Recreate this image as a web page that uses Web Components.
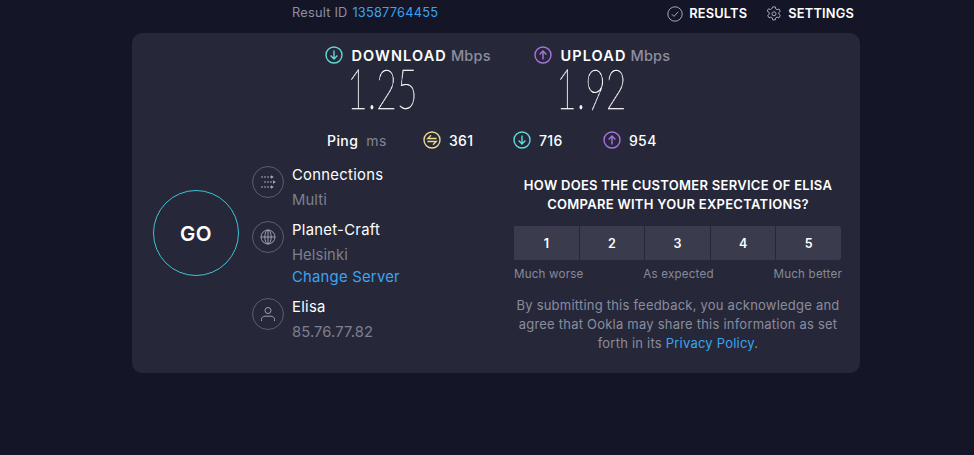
<!DOCTYPE html>
<html><head><meta charset="utf-8"><title>Speedtest result</title>
<style>
html,body{margin:0;height:100%;background:#141526;}
body{font-family:Inter,"Noto Sans",sans-serif;color:#fff;overflow:hidden;}
</style></head>
<body>
<st-app></st-app>
<script>
const ICONS={
 down:c=>`<svg width="18" height="18" viewBox="0 0 18 18" fill="none" stroke="${c}"><circle cx="9" cy="9" r="8" stroke-width="1.4"/><path d="M9 4.6v8.4M5.6 9.6 9 13l3.4-3.4" stroke-width="1.4"/></svg>`,
 up:c=>`<svg width="18" height="18" viewBox="0 0 18 18" fill="none" stroke="${c}"><circle cx="9" cy="9" r="8" stroke-width="1.4"/><path d="M9 13.4V5M5.6 8.4 9 5l3.4 3.4" stroke-width="1.4"/></svg>`,
 ping:c=>`<svg width="18" height="18" viewBox="0 0 18 18" fill="none" stroke="${c}"><circle cx="9" cy="9" r="8" stroke-width="1.4"/><path d="M13.600 7.500H4.700L8 4.200M4.400 10.500h8.900L10 13.800" stroke-width="1.300"/></svg>`,
 check:`<svg width="16" height="16" viewBox="0 0 16 16" fill="none" stroke="#a6a8b6"><circle cx="8" cy="8" r="7.200" stroke-width="1"/><path d="M4.800 8.200 7 10.400l4.200-4.600" stroke-width="1"/></svg>`,
 gear:`<svg width="16" height="16" viewBox="0 0 16 16" fill="none" stroke="#a6a8b6" stroke-width="1"><path d="M6.700.900h2.600l.400 2 1.400.800 1.900-.700 1.300 2.300-1.500 1.300v1.600l1.500 1.300-1.300 2.300-1.900-.700-1.400.800-.400 2H6.700l-.4-2-1.400-.8-1.900.7-1.300-2.300 1.500-1.300V6.400L1.200 5.100 2.500 2.800l1.900.7 1.400-.8z"/><circle cx="8" cy="7.800" r="2"/></svg>`,
 conn:`<svg width="15" height="14" viewBox="0 0 15 14" fill="none" stroke="#a6a8b8" stroke-width="1"><path d="M0 2h10M3 7h9M0 12h10" stroke-dasharray="2 1"/><path d="M10 .2 12.800 2 10 3.800zM12 5.200 14.800 7 12 8.800zM10 10.200 12.800 12 10 13.800z" fill="#a6a8b8" stroke="none"/></svg>`,
 globe:`<svg width="16" height="16" viewBox="0 0 16 16" fill="none" stroke="#9d9fae" stroke-width="1"><circle cx="8" cy="8" r="7"/><ellipse cx="8" cy="8" rx="3.200" ry="7"/><path d="M1 8h14M8 1v14"/></svg>`,
 user:`<svg width="16" height="16" viewBox="0 0 16 16" fill="none" stroke="#9d9fae" stroke-width="1"><circle cx="8" cy="4.500" r="3"/><path d="M1.500 15v-1.500c0-2 1.800-3.300 3.600-3.300h5.800c1.800 0 3.600 1.300 3.600 3.300V15"/></svg>`
};
function el(name,style,html){
 customElements.define(name,class extends HTMLElement{
  constructor(){super();const s=this.attachShadow({mode:"open"});
   s.innerHTML=`<style>${style}</style>`+(typeof html==="function"?html(this):html);}
 });
}
el("st-topbar",`:host{display:flex;height:33px;box-sizing:border-box;padding:0 120px 8px 292px;align-items:center;font-size:12.800px}
 .id{color:#8d8fa1;letter-spacing:.22px}a{color:#3aa4f0;text-decoration:none;margin-left:1px}
 nav{margin-left:auto;display:flex;gap:19px;font-weight:600;font-size:12.800px;position:relative;top:1px;letter-spacing:.2px}
 nav span{display:flex;align-items:center;gap:6px}svg{display:block}`,
 `<div class="id">Result ID <a>13587764455</a></div><nav><span>${ICONS.check}RESULTS</span><span>${ICONS.gear}SETTINGS</span></nav>`);
el("st-speed",`:host{display:block;width:175px}
 .h{display:flex;align-items:center;gap:8.500px;font-size:14.500px;font-weight:600;white-space:nowrap;letter-spacing:1.1px}
 .h i{font-style:normal;color:#8d8fa1;font-weight:500;margin-left:-4.500px;letter-spacing:.2px}
 svg{display:block}
 .v{font-family:Lato,sans-serif;font-weight:200;-webkit-text-stroke:.45px #fff;font-size:55px;line-height:46px;margin:1px 0 0 22px;transform:scaleX(.65);transform-origin:0 50%;height:46px;white-space:nowrap;color:#fff;will-change:transform}`,
 t=>`<div class="h">${t.getAttribute("kind")==="up"?ICONS.up("#a872e0"):ICONS.down("#5fd9d4")}<span>${t.getAttribute("label")}</span> <i>Mbps</i></div><div class="v">${t.getAttribute("value")}</div>`);
el("st-lat",`:host{display:flex;align-items:center;gap:8px;font-size:14px;font-weight:500;letter-spacing:.4px;width:90px}svg{display:block}`,
 t=>{const k=t.getAttribute("kind");const i=k==="up"?ICONS.up("#a872e0"):k==="down"?ICONS.down("#5fd9d4"):ICONS.ping("#e8d98c");return `${i}<span><slot></slot></span>`});
el("st-info",`:host{display:grid;grid-template-columns:32px auto;column-gap:8px;font-size:14.800px;line-height:25px;letter-spacing:.1px}
 .c{width:30px;height:30px;border:1px solid #5c5e70;border-radius:50%;display:flex;align-items:center;justify-content:center;margin-top:3px}
 svg{display:block}
 .n{color:#fff;letter-spacing:.3px}.s{color:#7d7f8e;white-space:nowrap}
 ::slotted(a){color:#3aa4f0;display:block;line-height:19px;margin-bottom:3px;letter-spacing:.25px}`,
 t=>`<div class="c">${ICONS[t.getAttribute("icon")]}</div><div><div class="n">${t.getAttribute("name")}</div><div class="s">${t.getAttribute("sub")}</div><slot></slot></div>`);
el("st-rating",`:host{display:flex;height:34px;gap:1px;background:#262839}
 div{flex:1;display:flex;align-items:center;justify-content:center;font-size:12.500px;font-weight:600;background:#3a3c4e}
 div:first-child{border-radius:3px 0 0 3px}div:last-child{border-radius:0 3px 3px 0}`,`<div>1</div><div>2</div><div>3</div><div>4</div><div>5</div>`);
el("st-survey",`:host{display:block;width:328px;text-align:center}
 h3{margin:0;font-size:13px;font-weight:600;line-height:19px;letter-spacing:.28px;white-space:nowrap}
 st-rating{margin:12px 1px 0 0}
 .l{display:flex;justify-content:space-between;color:#868899;font-size:11.600px;margin-top:7px;line-height:14px;letter-spacing:.2px}
 p{margin:15px 0 0;color:#8a8c9e;font-size:13px;line-height:19px;letter-spacing:.22px;white-space:nowrap}
 a{color:#3aa4f0}`,
 `<h3>HOW DOES THE CUSTOMER SERVICE OF ELISA<br>COMPARE WITH YOUR EXPECTATIONS?</h3><st-rating></st-rating>
 <div class="l"><span>Much worse</span><span>As expected</span><span>Much better</span></div>
 <p>By submitting this feedback, you acknowledge and<br>agree that Ookla may share this information as set<br>forth in its <a>Privacy Policy</a>.</p>`);
el("st-go",`:host{display:flex;flex:none;width:84px;height:84px;border:1px solid #3fc3d6;border-radius:50%;align-items:center;justify-content:center;font-size:20.500px;font-weight:600;letter-spacing:.4px}`,`GO`);
el("st-card",`:host{display:block;width:728px;height:340px;box-sizing:border-box;margin-left:132px;background:#262839;border-radius:10px;padding-top:13px}
 .speeds{display:flex;padding-left:193px;gap:34px}
 .ping{display:flex;align-items:center;height:20px;margin-top:19px;padding-left:195px;font-size:14px;font-weight:500}
 .ping>span:first-child{letter-spacing:.4px}
 .ping .m{color:#83858f;margin-left:8px;margin-right:36px;font-weight:400;letter-spacing:.5px}
 .main{display:flex;margin-top:13px}
 st-go{margin:27px 13px 0 21px}
 .info{display:flex;flex-direction:column;gap:5px;width:262px;flex:none}
 st-survey{margin-top:13px}`,
 `<div class="speeds"><st-speed kind="down" label="DOWNLOAD" value="1.25"></st-speed><st-speed kind="up" label="UPLOAD" value="1.92"></st-speed></div>
 <div class="ping"><span>Ping</span><span class="m">ms</span><st-lat kind="ping">361</st-lat><st-lat kind="down">716</st-lat><st-lat kind="up">954</st-lat></div>
 <div class="main"><st-go></st-go>
 <div class="info"><st-info icon="conn" name="Connections" sub="Multi"></st-info>
 <st-info icon="globe" name="Planet-Craft" sub="Helsinki"><a>Change Server</a></st-info>
 <st-info icon="user" name="Elisa" sub="85.76.77.82"></st-info></div>
 <st-survey></st-survey></div>`);
el("st-app",`:host{display:block}`,`<st-topbar></st-topbar><st-card></st-card>`);
</script>
</body></html>
